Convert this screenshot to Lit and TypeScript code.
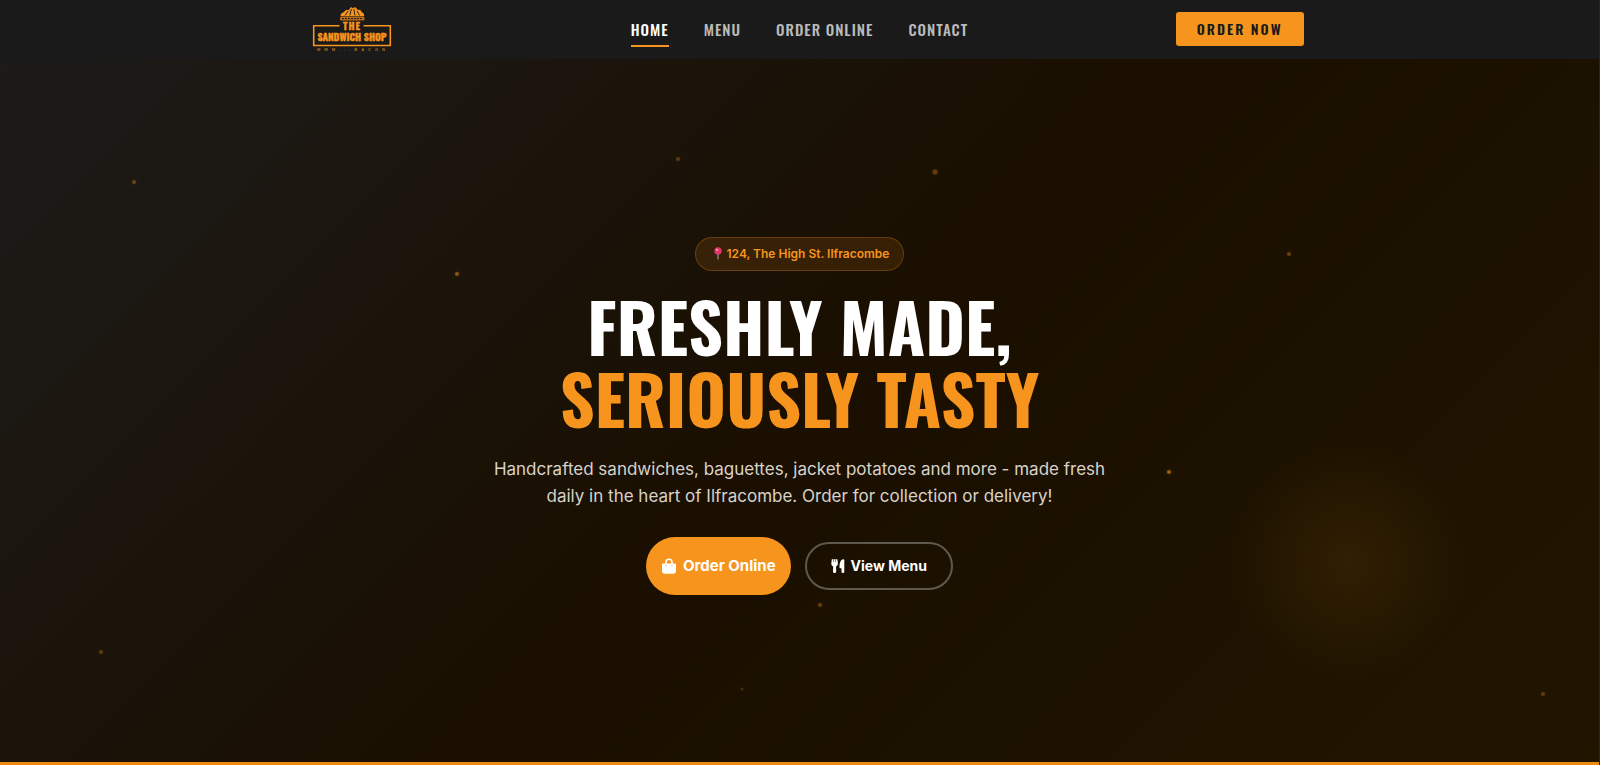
import { LitElement, html, css, svg } from "lit";
import { customElement } from "lit/decorators.js";
import { classMap } from "lit/directives/class-map.js";
import { styleMap } from "lit/directives/style-map.js";

interface Ember {
  left: number;
  top: number;
  size: number;
  opacity: number;
}

const EMBERS: Ember[] = [
  { left: 8.4, top: 17.5, size: 4, opacity: 0.35 },
  { left: 42.4, top: 14.2, size: 4, opacity: 0.3 },
  { left: 58.5, top: 16.1, size: 5, opacity: 0.35 },
  { left: 28.6, top: 30.6, size: 4, opacity: 0.5 },
  { left: 80.6, top: 27.7, size: 4, opacity: 0.35 },
  { left: 73.1, top: 58.7, size: 4, opacity: 0.6 },
  { left: 6.3, top: 84.3, size: 4, opacity: 0.3 },
  { left: 46.4, top: 89.6, size: 3, opacity: 0.2 },
  { left: 51.3, top: 77.7, size: 4, opacity: 0.35 },
  { left: 96.5, top: 90.3, size: 4, opacity: 0.3 },
  { left: 34.9, top: 58.6, size: 3, opacity: 0.4 },
];

const LINKS = ["Home", "Menu", "Order Online", "Contact"];

const logo = svg`
  <svg class="logo" viewBox="0 0 80 46" role="img" aria-label="The Sandwich Shop">
    <path fill="#f7941d" d="M28.500 10.300c0-2 1-3.200 2.600-3.800L34.500 3.800l2 .4L39 1l2 1.200L43 .900l3 3.200 2.200-.4 1.600 2.600c1.800.6 2.400 1.800 2.400 4z"/>
    <path d="M33 9.500l3.200-4.500M37.800 9.500l1.600-6.500M43 9.500l-1.200-6.500M47.500 9.500l-2.300-4.500" stroke="#1a1a1a" fill="none" stroke-width=".9"/>
    <rect x="28" y="10.800" width="24.500" height="3.600" rx="1.200" fill="#b96d1a"/>
    <path d="M30 12.600h20.500" stroke="#1a1a1a" stroke-width="1" stroke-dasharray="2 1"/>
    <path d="M27.500 19.800H1.700V39.500H78.300V19.800H51.500" fill="none" stroke="#f7941d" stroke-width="1.600"/>
    <text x="40" y="23.500" text-anchor="middle" class="logo-the">THE</text>
    <text x="40" y="35" text-anchor="middle" class="logo-name">SANDWICH SHOP</text>
    <text x="41" y="45" text-anchor="middle" class="logo-tag">MMM...BACON</text>
  </svg>`;

const bagIcon = svg`
  <svg class="icon" viewBox="0 0 16 16" aria-hidden="true">
    <path d="M5 7V4.300a3 3 0 0 1 6 0V7" fill="none" stroke="currentColor" stroke-width="1.600"/>
    <path d="M2.200 5.500h11.600a1.200 1.200 0 0 1 1.200 1.200V13a2.800 2.800 0 0 1-2.800 2.800H3.800A2.800 2.800 0 0 1 1 13V6.700a1.200 1.200 0 0 1 1.200-1.200z" fill="currentColor"/>
    <circle cx="5" cy="7.500" r=".6" fill="#f7941d"/><circle cx="11" cy="7.500" r=".6" fill="#f7941d"/>
  </svg>`;

const cutleryIcon = svg`
  <svg class="icon" viewBox="0 0 14 14" aria-hidden="true">
    <path fill="currentColor" d="M.800.300h5.600l.5 4.200c.1 1.500-.8 2.500-1.900 2.900l.2 5.200c0 .8-.5 1.300-1.100 1.300h-1c-.6 0-1.100-.5-1.100-1.300l.2-5.200C1.100 7 .200 6 .300 4.500z"/>
    <path d="M2.600.200v3M4.600.200v3" stroke="#1a0f00" stroke-width=".5"/>
    <path fill="currentColor" d="M12.500.200c.5 0 .8.300.8.700v11.900c0 .7-.4 1.100-1 1.100h-.8c-.6 0-1-.4-1-1.100V9.200H9.300c-.5 0-.8-.3-.8-.8C8.500 4 9.500.600 12.500.200z"/>
  </svg>`;

const pinIcon = svg`
  <svg class="pin" viewBox="0 0 8 13" aria-hidden="true">
    <path d="M4 6v6.500" stroke="#9aa3ab" stroke-width="1.100"/>
    <circle cx="4" cy="4" r="3.700" fill="#e0356a"/>
    <circle cx="3" cy="2.800" r="1.100" fill="#f7a0b8"/>
  </svg>`;

@customElement("app-root")
export class AppRoot extends LitElement {
  static styles = css`
    :host {
      display: flex;
      flex-direction: column;
      min-height: 100vh;
      box-sizing: border-box;
      border-right: 1px solid #24262a;
      background: #1a1a1a;
      color: #fff;
      font-family: Inter, "Liberation Sans", sans-serif;
    }
    a {
      color: inherit;
      text-decoration: none;
    }
    header {
      background: #1a1a1a;
      padding: 0 24px 1px;
    }
    .bar {
      display: grid;
      grid-template-columns: 1fr auto 1fr;
      align-items: center;
      max-width: 1008px;
      height: 58px;
      margin: 0 auto;
    }
    .brand {
      display: block;
      width: 80px;
      margin-left: 16px;
    }
    .logo {
      display: block;
      width: 80px;
      height: 46px;
      fill: #f7941d;
    }
    .logo-the {
      font: 700 10px Oswald, sans-serif;
      letter-spacing: 1px;
      stroke: #f7941d;
      stroke-width: 0.3px;
    }
    .logo-name {
      font: 700 10px Oswald, sans-serif;
      stroke: #f7941d;
      stroke-width: 0.4px;
    }
    .logo-tag {
      font: 700 4px "Liberation Sans", sans-serif;
      letter-spacing: 4px;
      fill: #b96d1a;
    }
    nav {
      display: flex;
      gap: 35px;
    }
    nav a {
      padding: 8px 0 6px;
      border-bottom: 2px solid transparent;
      color: #bbb;
      font: 500 15px/20px Oswald, sans-serif;
      letter-spacing: 1px;
      text-transform: uppercase;
    }
    nav a.current {
      color: #fff;
      border-color: #f7941d;
    }
    .cta {
      justify-self: end;
      padding: 6px 21px 7px;
      border-radius: 3px;
      background: #f7941d;
      color: #1a1a1a;
      font: 600 14px/21px Oswald, sans-serif;
      letter-spacing: 2px;
      text-transform: uppercase;
    }
    main {
      position: relative;
      flex: 1;
      display: flex;
      flex-direction: column;
      align-items: center;
      justify-content: center;
      padding: 40px 24px 30px;
      text-align: center;
      background:
        radial-gradient(circle at 84.3% 71.5%, rgba(247, 148, 29, 0.09), transparent 120px),
        linear-gradient(135deg, #1c1b1a 0%, #1a0f00 50%, #201600 100%);
      border-bottom: 3px solid #ee8a10;
    }
    .ember {
      position: absolute;
      transform: translate(-50%, -50%);
      border-radius: 50%;
      background: #f7941d;
      box-shadow: 0 0 4px rgba(247, 148, 29, 0.4);
    }
    .content {
      position: relative;
      display: flex;
      flex-direction: column;
      align-items: center;
    }
    .badge {
      display: flex;
      align-items: center;
      gap: 5px;
      padding: 8px 14px 8px 18px;
      border: 1px solid rgba(247, 148, 29, 0.25);
      border-radius: 17px;
      background: rgba(247, 148, 29, 0.13);
      color: #f7941d;
      font-size: 12px;
      font-weight: 600;
      line-height: 16px;
    }
    .pin {
      width: 8px;
      height: 13px;
    }
    h1 {
      margin: 19px 0 22px;
      font: 700 68px/72px Oswald, sans-serif;
      text-transform: uppercase;
    }
    h1 span {
      display: block;
    }
    h1 .accent {
      color: #f7941d;
    }
    .lead {
      max-width: 620px;
      margin: 0 0 27px;
      color: #d8d2ca;
      font-size: 17px;
      line-height: 27px;
    }
    .actions {
      display: flex;
      align-items: center;
      gap: 14px;
    }
    .button {
      display: flex;
      align-items: center;
      gap: 6px;
      font-size: 14px;
      font-weight: 700;
    }
    .primary {
      padding: 19px 15px;
      border-radius: 29px;
      background: #f7941d;
      font-size: 15px;
      line-height: 20px;
    }
    .secondary {
      padding: 12px 24px;
      border: 2px solid rgba(255, 255, 255, 0.3);
      border-radius: 24px;
      line-height: 20px;
    }
    .icon {
      width: 14px;
      height: 14px;
    }
    .primary .icon {
      width: 16px;
      height: 16px;
    }
  `;

  render() {
    return html`
      <header>
        <div class="bar">
          <a class="brand" href="#home">${logo}</a>
          <nav aria-label="Main">
            ${LINKS.map(
              (label, i) => html`<a class=${classMap({ current: i === 0 })} href="#${label.toLowerCase().replace(" ", "-")}">${label}</a>`,
            )}
          </nav>
          <a class="cta" href="#order">Order Now</a>
        </div>
      </header>
      <main>
        ${EMBERS.map(
          (e) => html`<i
            class="ember"
            style=${styleMap({
              left: `${e.left}%`,
              top: `${e.top}%`,
              width: `${e.size}px`,
              height: `${e.size}px`,
              opacity: `${e.opacity}`,
            })}
          ></i>`,
        )}
        <div class="content">
          <div class="badge">${pinIcon}<span>124, The High St. Ilfracombe</span></div>
          <h1><span>Freshly Made,</span><span class="accent">Seriously Tasty</span></h1>
          <p class="lead">
            Handcrafted sandwiches, baguettes, jacket potatoes and more - made fresh daily in the heart of Ilfracombe.
            Order for collection or delivery!
          </p>
          <div class="actions">
            <a class="button primary" href="#order">${bagIcon}<span>Order Online</span></a>
            <a class="button secondary" href="#menu">${cutleryIcon}<span>View Menu</span></a>
          </div>
        </div>
      </main>
    `;
  }
}
